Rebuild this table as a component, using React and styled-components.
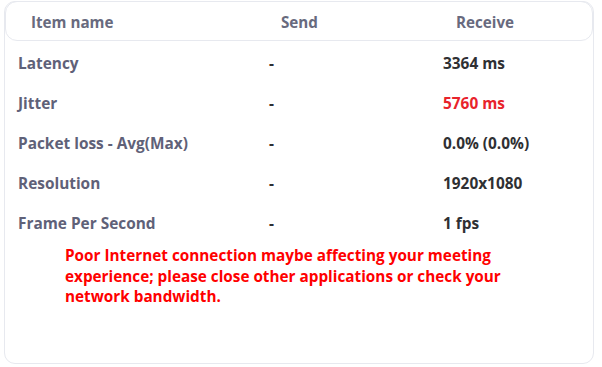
import React from 'react';
import styled, { createGlobalStyle } from 'styled-components';

const GlobalStyle = createGlobalStyle`
  body {
    margin: 0;
    background: #ffffff;
    font-family: "Open Sans", "Noto Sans", sans-serif;
  }
`;

const Card = styled.div`
  box-sizing: border-box;
  width: 590px;
  height: 363px;
  margin: 1px 0 0 4px;
  border: 1px solid #e7e9ef;
  border-radius: 11px;
  background: #fff;
`;

const HeaderRow = styled.div`
  display: grid;
  grid-template-columns: 250px 175px 1fr;
  align-items: center;
  box-sizing: border-box;
  height: 40px;
  margin: -1px 0 0 0;
  padding: 2px 0 0 25px;
  border: 1px solid #e7e9ef;
  border-radius: 12px;
`;

const HeaderCell = styled.div`
  font-size: 15.2px;
  font-weight: 700;
  color: #686a7e;
`;

const Rows = styled.div`
  padding-top: 2px;
`;

const Row = styled.div`
  display: grid;
  grid-template-columns: 251px 174px 1fr;
  align-items: center;
  height: 40px;
  padding-left: 13px;
`;

const Label = styled.div`
  font-size: 15.4px;
  font-weight: 700;
  color: #5f6178;
`;

const Value = styled.div`
  font-size: 15.4px;
  font-weight: 700;
  color: ${p => (p.$alert ? '#e8232b' : '#2f3033')};
`;

const Message = styled.p`
  margin: 2px 0 0 60px;
  width: 450px;
  font-size: 15.3px;
  line-height: 20.5px;
  font-weight: 700;
  color: #ff0000;
`;

const rows = [
  { name: 'Latency', send: '-', receive: '3364 ms' },
  { name: 'Jitter', send: '-', receive: '5760 ms', alert: true },
  { name: 'Packet loss - Avg(Max)', send: '-', receive: '0.0% (0.0%)' },
  { name: 'Resolution', send: '-', receive: '1920x1080' },
  { name: 'Frame Per Second', send: '-', receive: '1 fps' },
];

export default function App() {
  return (
    <>
      <GlobalStyle />
      <Card>
        <HeaderRow>
          <HeaderCell>Item name</HeaderCell>
          <HeaderCell>Send</HeaderCell>
          <HeaderCell>Receive</HeaderCell>
        </HeaderRow>
        <Rows>
          {rows.map(r => (
            <Row key={r.name}>
              <Label>{r.name}</Label>
              <Value>{r.send}</Value>
              <Value $alert={r.alert}>{r.receive}</Value>
            </Row>
          ))}
        </Rows>
        <Message>
          Poor Internet connection maybe affecting your meeting experience;
          please close other applications or check your network bandwidth.
        </Message>
      </Card>
    </>
  );
}
